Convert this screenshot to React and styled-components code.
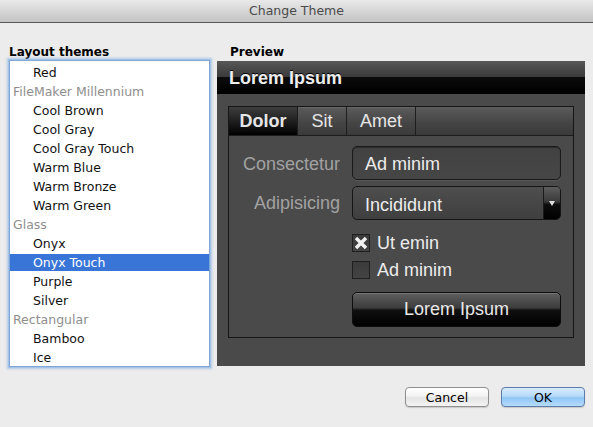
import React from "react";
import styled, { createGlobalStyle } from "styled-components";

const Global = createGlobalStyle`
  html, body { margin: 0; padding: 0; background: #ececec; }
  body { font-family: "DejaVu Sans", "Liberation Sans", sans-serif; }
  * { box-sizing: border-box; }
`;

const Window = styled.div`
  width: 593px;
  height: 427px;
  background: #ececec;
  display: flex;
  flex-direction: column;
  overflow: hidden;
`;

const TitleBar = styled.div`
  height: 23px;
  flex: none;
  background: linear-gradient(#e9e9e9, #d2d2d2 60%, #c4c4c4);
  border-bottom: 1px solid #575757;
  display: flex;
  align-items: center;
  justify-content: center;
  font-size: 12.5px;
  color: #4a4a4a;
  padding-bottom: 1px;
`;

const Body = styled.div`
  flex: 1;
  display: flex;
  flex-direction: column;
  padding: 21px 8px 0 9px;
`;

const Columns = styled.div`
  display: grid;
  grid-template-columns: 201px 368px;
  column-gap: 7px;
`;

const Column = styled.div`
  display: flex;
  flex-direction: column;
`;

const SectionLabel = styled.div`
  font-weight: bold;
  font-size: 12px;
  line-height: 16px;
  height: 16px;
  color: #000;
  padding-left: ${(p) => p.$indent || 0}px;
  margin-bottom: ${(p) => p.$gap || 0}px;
`;

const ListBox = styled.div`
  height: 307px;
  background: #fff;
  border: 1px solid #7fa6d4;
  box-shadow: 0 0 0 1px #a4c3e6, 0 0 2px 2px rgba(125, 170, 225, 0.55);
  display: flex;
  flex-direction: column;
  gap: 2px;
  padding-top: 3px;
  overflow: hidden;
`;

const ListRow = styled.div`
  height: 17px;
  flex: none;
  display: flex;
  align-items: center;
  font-size: 12.5px;
  padding-left: ${(p) => (p.$group ? 3 : 23)}px;
  color: ${(p) => (p.$group ? "#8e8e8e" : p.$selected ? "#fff" : "#111")};
  background: ${(p) => (p.$selected ? "#3875d7" : "transparent")};
`;

const Preview = styled.div`
  height: 305px;
  background: #4a4a4a;
  display: flex;
  flex-direction: column;
  font-family: "Liberation Sans", Arial, sans-serif;
`;

const PreviewHeader = styled.div`
  height: 33px;
  flex: none;
  background: linear-gradient(#575757 0, #3b3b3b 47%, #0b0b0b 50%, #000 100%);
  color: #ededed;
  font-weight: bold;
  font-size: 18px;
  display: flex;
  align-items: center;
  padding-left: 12px;
  padding-top: 1px;
  text-shadow: 0 -1px 0 #000;
`;

const PreviewBody = styled.div`
  padding: 12px 11px 0 11px;
`;

const TabBox = styled.div`
  height: 232px;
  border: 1px solid #161616;
  display: flex;
  flex-direction: column;
`;

const TabStrip = styled.div`
  height: 29px;
  flex: none;
  display: flex;
  border-bottom: 1px solid #1c1c1c;
  background: linear-gradient(#5b5b5b, #444 60%, #3a3a3a);
`;

const Tab = styled.div`
  display: flex;
  align-items: center;
  justify-content: center;
  width: ${(p) => p.$w}px;
  border-right: 1px solid #1e1e1e;
  font-size: 18px;
  color: #e6e6e6;
  font-weight: ${(p) => (p.$active ? "bold" : "normal")};
  background: ${(p) =>
    p.$active
      ? "linear-gradient(#3e3e3e, #1c1c1c 55%, #000)"
      : "linear-gradient(#5b5b5b, #444 60%, #3a3a3a)"};
  box-shadow: ${(p) => (p.$active ? "none" : "inset 0 1px 0 #666")};
  padding-top: 1px;
`;

const Form = styled.div`
  display: flex;
  flex-direction: column;
  padding-top: 10px;
`;

const FormRow = styled.div`
  display: grid;
  grid-template-columns: 111px 209px;
  column-gap: 12px;
  align-items: center;
  margin-top: ${(p) => p.$mt || 0}px;
`;

const FieldLabel = styled.div`
  text-align: right;
  font-size: 18px;
  color: #a2a2a2;
  padding-top: ${(p) => p.$pt || 0}px;
`;

const TextField = styled.div`
  height: 34px;
  border: 1px solid #1a1a1a;
  border-radius: 5px;
  background: linear-gradient(#424242, #464646);
  box-shadow: inset 0 1px 1px rgba(0, 0, 0, 0.35), 0 1px 0 rgba(255, 255, 255, 0.08);
  display: flex;
  align-items: center;
  padding-left: 12px;
  padding-top: 3px;
  font-size: 18px;
  color: #ececec;
`;

const Dropdown = styled.div`
  height: 34px;
  border: 1px solid #151515;
  border-radius: 5px;
  background: linear-gradient(#4e4e4e, #3f3f3f);
  display: flex;
  overflow: hidden;
`;

const DropdownValue = styled.div`
  flex: 1;
  display: flex;
  align-items: center;
  padding-left: 12px;
  padding-top: 4px;
  font-size: 18px;
  color: #ececec;
`;

const DropdownArrow = styled.div`
  width: 17px;
  border-left: 1px solid #1a1a1a;
  background: linear-gradient(#5d5d5d, #3a3a3a 45%, #0c0c0c 55%, #000);
  display: flex;
  align-items: center;
  justify-content: center;
`;

const CheckRow = styled.div`
  display: flex;
  align-items: center;
  gap: 7px;
  font-size: 18px;
  color: #ececec;
  height: 18px;
`;

const CheckBox = styled.div`
  width: 18px;
  height: 18px;
  border: 1px solid #1f1f1f;
  background: linear-gradient(#3a3a3a, #444);
  display: flex;
  align-items: center;
  justify-content: center;
`;

const BlackButton = styled.div`
  height: 35px;
  border: 1px solid #0d0d0d;
  border-radius: 5px;
  background: linear-gradient(#5f5f5f 0, #3c3c3c 45%, #101010 52%, #000 100%);
  box-shadow: inset 0 1px 0 rgba(255, 255, 255, 0.15);
  display: flex;
  align-items: center;
  justify-content: center;
  font-size: 18px;
  color: #e8e8e8;
`;

const Footer = styled.div`
  display: flex;
  justify-content: flex-end;
  gap: 12px;
  margin-top: 20px;
`;

const MacButton = styled.div`
  width: 84px;
  height: 20px;
  border-radius: 4px;
  display: flex;
  align-items: center;
  justify-content: center;
  font-size: 12.5px;
  color: #000;
  border: 1px solid ${(p) => (p.$default ? "#5d7ba8" : "#8f8f8f")};
  background: ${(p) =>
    p.$default
      ? "linear-gradient(#d9ecfd, #b6dafa 45%, #8fc6f6 55%, #b5dcfb)"
      : "linear-gradient(#ffffff, #f3f3f3 45%, #e4e4e4 55%, #f4f4f4)"};
  box-shadow: 0 1px 1px rgba(0, 0, 0, 0.15);
`;

const rows = [
  { t: "Red" },
  { t: "FileMaker Millennium", g: true },
  { t: "Cool Brown" },
  { t: "Cool Gray" },
  { t: "Cool Gray Touch" },
  { t: "Warm Blue" },
  { t: "Warm Bronze" },
  { t: "Warm Green" },
  { t: "Glass", g: true },
  { t: "Onyx" },
  { t: "Onyx Touch", s: true },
  { t: "Purple" },
  { t: "Silver" },
  { t: "Rectangular", g: true },
  { t: "Bamboo" },
  { t: "Ice" },
];

export default function App() {
  return (
    <Window>
      <Global />
      <TitleBar>Change Theme</TitleBar>
      <Body>
        <Columns>
          <Column>
            <SectionLabel>Layout themes</SectionLabel>
            <ListBox>
              {rows.map((r) => (
                <ListRow key={r.t} $group={r.g} $selected={r.s}>
                  {r.t}
                </ListRow>
              ))}
            </ListBox>
          </Column>
          <Column>
            <SectionLabel $indent={13} $gap={1}>
              Preview
            </SectionLabel>
            <Preview>
              <PreviewHeader>Lorem Ipsum</PreviewHeader>
              <PreviewBody>
                <TabBox>
                  <TabStrip>
                    <Tab $active $w={69}>Dolor</Tab>
                    <Tab $w={49}>Sit</Tab>
                    <Tab $w={69}>Amet</Tab>
                  </TabStrip>
                  <Form>
                    <FormRow>
                      <FieldLabel $pt={2}>Consectetur</FieldLabel>
                      <TextField>Ad minim</TextField>
                    </FormRow>
                    <FormRow $mt={6}>
                      <FieldLabel>Adipisicing</FieldLabel>
                      <Dropdown>
                        <DropdownValue>Incididunt</DropdownValue>
                        <DropdownArrow>
                          <svg width="6" height="5" viewBox="0 0 6 5">
                            <path d="M0 0 H6 L3 5 Z" fill="#e0e0e0" />
                          </svg>
                        </DropdownArrow>
                      </Dropdown>
                    </FormRow>
                    <FormRow $mt={14}>
                      <span />
                      <CheckRow>
                        <CheckBox>
                          <svg width="14" height="14" viewBox="0 0 14 14">
                            <path
                              d="M2 2 L12 12 M12 2 L2 12"
                              stroke="#f2f2f2"
                              strokeWidth="3.4"
                            />
                          </svg>
                        </CheckBox>
                        Ut emin
                      </CheckRow>
                    </FormRow>
                    <FormRow $mt={9}>
                      <span />
                      <CheckRow>
                        <CheckBox />
                        Ad minim
                      </CheckRow>
                    </FormRow>
                    <FormRow $mt={13}>
                      <span />
                      <BlackButton>Lorem Ipsum</BlackButton>
                    </FormRow>
                  </Form>
                </TabBox>
              </PreviewBody>
            </Preview>
          </Column>
        </Columns>
        <Footer>
          <MacButton>Cancel</MacButton>
          <MacButton $default>OK</MacButton>
        </Footer>
      </Body>
    </Window>
  );
}
